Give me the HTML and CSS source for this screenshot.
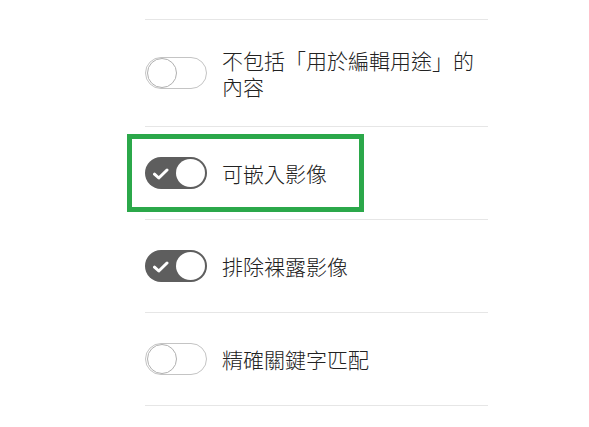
FILE: index.html
```html
<!DOCTYPE html>
<html lang="zh-Hant">
<head>
<meta charset="utf-8">
<link rel="stylesheet" href="styles.css">
</head>
<body>
<div class="list">
  <div class="row">
    <span class="toggle"><span class="knob"></span></span>
    <span class="label">不包括「用於編輯用途」的<br>內容</span>
  </div>
  <div class="row highlighted">
    <span class="toggle on">
      <svg class="check" width="16" height="12" viewBox="0 0 16 12"><path d="M1.5 6.2 L5.8 10 L14 2" fill="none" stroke="#fff" stroke-width="3" stroke-linecap="round" stroke-linejoin="round"/></svg>
      <span class="knob"></span>
    </span>
    <span class="label">可嵌入影像</span>
    <span class="frame"></span>
  </div>
  <div class="row">
    <span class="toggle on">
      <svg class="check" width="16" height="12" viewBox="0 0 16 12"><path d="M1.5 6.2 L5.8 10 L14 2" fill="none" stroke="#fff" stroke-width="3" stroke-linecap="round" stroke-linejoin="round"/></svg>
      <span class="knob"></span>
    </span>
    <span class="label">排除裸露影像</span>
  </div>
  <div class="row">
    <span class="toggle"><span class="knob"></span></span>
    <span class="label">精確關鍵字匹配</span>
  </div>
</div>
</body>
</html>
```

FILE: styles.css
```css
html, body {
  margin: 0;
  padding: 0;
  background: #ffffff;
}
body {
  font-family: "Noto Sans CJK TC", "Noto Sans CJK SC", "Noto Sans", sans-serif;
  color: #222222;
}
.list {
  margin: 19px 0 0 145px;
  width: 343px;
  border-top: 1px solid #e6e6e6;
}
.row {
  position: relative;
  display: flex;
  align-items: center;
  gap: 15px;
  min-height: 38px;
  padding: 27px 0;
  border-bottom: 1px solid #e6e6e6;
}
.label {
  font-size: 21px;
  font-weight: 300;
  line-height: 26px;
}
.toggle {
  position: relative;
  flex: 0 0 auto;
  box-sizing: border-box;
  width: 62px;
  height: 32px;
  border-radius: 16px;
  border: 1px solid #c4c4c4;
  background: #ffffff;
}
.toggle .knob {
  position: absolute;
  left: 1px;
  top: 0px;
  box-sizing: border-box;
  width: 30px;
  height: 30px;
  border-radius: 50%;
  border: 1px solid #b0b0b0;
  background: #ffffff;
}
.toggle.on {
  border: none;
  background: #5e5e5e;
}
.toggle.on .knob {
  left: 31px;
  top: 2px;
  width: 29px;
  height: 28px;
  border: none;
}
.check {
  position: absolute;
  left: 8px;
  top: 11px;
}
.frame {
  position: absolute;
  left: -18px;
  top: 7px;
  width: 237px;
  height: 78px;
  box-sizing: border-box;
  border: 5px solid #2ba84a;
  pointer-events: none;
}
```
